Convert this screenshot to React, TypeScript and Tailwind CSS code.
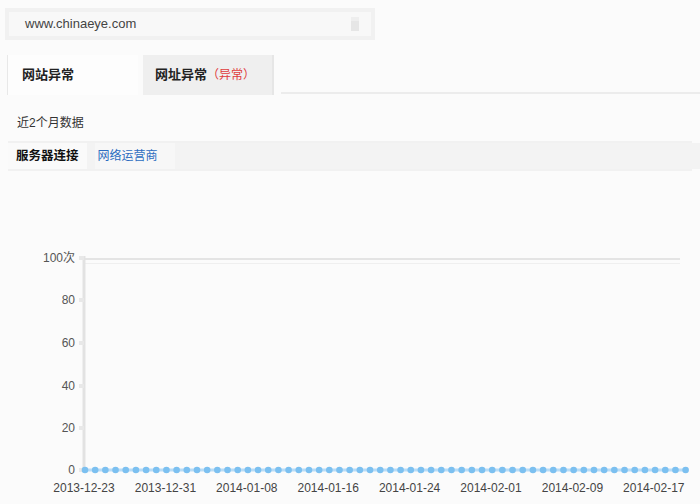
import React from "react";

const font = { fontFamily: '"Liberation Sans", Arial, "Noto Sans CJK SC", sans-serif' };

function Chart() {
  const x0 = 84;
  const step = 10.18;
  const n = 60;
  const dots = Array.from({ length: n }, (_, i) => x0 + 1 + i * step);
  const yTicks = [
    { label: "100次", y: 258 },
    { label: "80", y: 300 },
    { label: "60", y: 343 },
    { label: "40", y: 386 },
    { label: "20", y: 428 },
    { label: "0", y: 470 },
  ];
  const xLabels = [
    "2013-12-23",
    "2013-12-31",
    "2014-01-08",
    "2014-01-16",
    "2014-01-24",
    "2014-02-01",
    "2014-02-09",
    "2014-02-17",
  ];
  return (
    <svg width="700" height="333" viewBox="0 171 700 333" className="block" style={font}>
      <line x1={x0} y1={259} x2={680} y2={259} stroke="#e4e4e4" strokeWidth="2" />
      <line x1={x0} y1={263.5} x2={680} y2={263.5} stroke="#efefef" strokeWidth="1" />
      <line x1={x0} y1={256} x2={x0} y2={470} stroke="#e2e2e2" strokeWidth="3" />
      {yTicks.map((t) => (
        <g key={t.label}>
          <line x1={x0 - 5} y1={t.y} x2={x0} y2={t.y} stroke="#e8e8e8" strokeWidth="4" />
          <text x={75} y={t.y + 4} textAnchor="end" fontSize="12" fill="#555">
            {t.label}
          </text>
        </g>
      ))}
      <line x1={dots[0]} y1={470} x2={dots[n - 1]} y2={470} stroke="#b7dcf7" strokeWidth="3" />
      {dots.map((x, i) => (
        <circle key={i} cx={x} cy={470} r={3.3} fill="#7cc0f0" />
      ))}
      {xLabels.map((l, i) => (
        <text key={l} x={x0 + i * 81.4} y={492} textAnchor="middle" fontSize="12" fill="#444">
          {l}
        </text>
      ))}
    </svg>
  );
}

export default function App() {
  return (
    <div className="w-[700px] h-[504px] bg-[#fbfbfb] overflow-hidden text-[12px] text-[#333]" style={font}>
      <div className="pt-[8px] pl-[5px]">
        <div className="w-[370px] h-[32px] bg-[#f1f1f1] p-[4px] flex">
          <div className="flex-1 bg-[#f8f8f8] flex items-center justify-between pl-[16px] pr-[12px]">
            <span className="text-[13px] text-[#444]">www.chinaeye.com</span>
            <span className="w-[8px] h-[14px] bg-[#e6e6e6] border-t-[4px] border-[#eeeeee]"></span>
          </div>
        </div>
      </div>
      <div className="mt-[15px] flex items-end h-[40px]">
        <div className="ml-[7px] w-[131px] h-[40px] border-l border-[#e8e8e8] bg-[#fdfdfd] flex items-center pl-[14px] font-bold text-[13px] text-[#222]">
          网站异常
        </div>
        <div className="ml-[5px] w-[131px] h-[40px] bg-[#efefef] border-r-[2px] border-[#e6e6e6] flex items-center pl-[12px] font-bold text-[13px] text-[#222]">
          网址异常<span className="font-normal text-[#e03c3c] text-[12px]">（异常）</span>
        </div>
        <div className="flex-1 ml-[7px] h-[2px] bg-[#ececec] mb-[1px]"></div>
      </div>
      <div className="mt-[19px] pl-[17px] h-[18px] flex items-center text-[12px] text-[#333]">近2个月数据</div>
      <div className="mt-[9px] h-[2px] bg-[#f1f1f1] mx-[8px]"></div>
      <div className="flex h-[26px] bg-[#f3f3f3] items-center ml-[8px]">
        <div className="h-full flex items-center px-[8px] bg-[#fafafa] font-bold text-[12.5px] text-[#111]">服务器连接</div>
        <div className="ml-[8px] h-full w-[80px] flex items-center pl-[3px] bg-[#f7f7f7] text-[12px] text-[#2c6cc0]">网络运营商</div>
      </div>
      <div className="h-[2px] bg-[#f1f1f1] mx-[8px]"></div>
      <Chart />
    </div>
  );
}
